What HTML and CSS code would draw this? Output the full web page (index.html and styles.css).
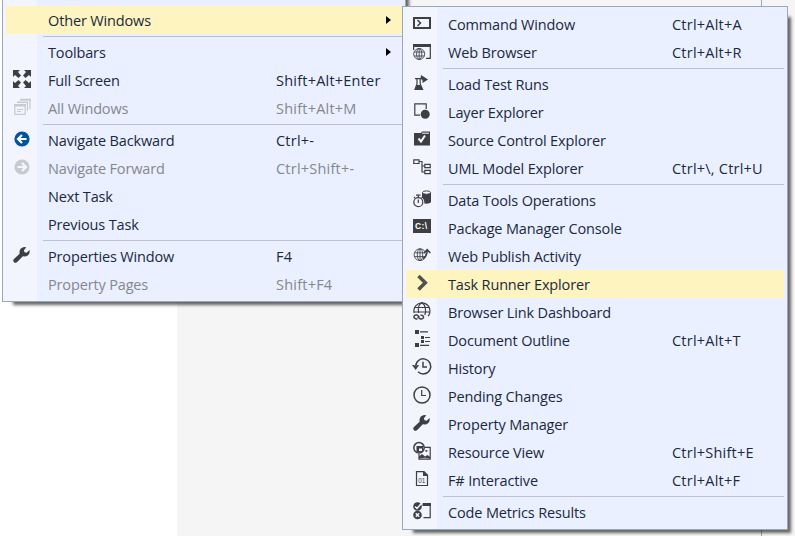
FILE: index.html
```html
<!DOCTYPE html>
<html lang="en">
<head>
<meta charset="utf-8">
<title>View menu</title>
<link rel="stylesheet" href="styles.css">
</head>
<body>
<div class="workspace"></div>
<div class="edge"></div>

<svg class="defs" aria-hidden="true">
  <symbol id="wrench" viewBox="0 0 18 18"><path d="M1 16.200C-.3 15 .2 13.600 1.200 12.800L6.600 7.800C6 4.500 7.600 1.500 11 1L13.300 1.200L10.900 4.200L11.500 6.200L13.600 6.800L16.600 4C17.200 7.500 15 10.300 12 10.500L9.800 10.300L4.500 15.800C3.300 17 1.800 17 1 16.200Z"/></symbol>
</svg>

<nav class="menu menu-main">
  <div class="item active"><i></i><span>Other Windows</span><b class="arrow"></b></div>
  <hr>
  <div class="item"><i></i><span>Toolbars</span><b class="arrow"></b></div>
  <div class="item"><i><svg viewBox="0 0 18 18"><path d="M0 0H7L5 2L8 5.500L5.500 8L2 5L0 7ZM18 0V7L16 5L12.500 8L10 5.500L13 2L11 0ZM0 18V11L2 13L5.500 10L8 12.500L5 16L7 18ZM18 18H11L13 16L10 12.500L12.500 10L16 13L18 11Z"/></svg></i><span>Full Screen</span><kbd>Shift+Alt+Enter</kbd></div>
  <div class="item disabled"><i><svg viewBox="0 0 18 18"><path class="ln thin" d="M1.800 7H12.200V16.300H1.800ZM4 4.500H14.500V13M7 1.700H17V11"/><path d="M1 6H13V8.500H1ZM4 3.500H15V5H4ZM7 .8H18V2.500H7ZM4 11H10V12H4ZM4 13H8V14H4Z"/></svg></i><span>All Windows</span><kbd>Shift+Alt+M</kbd></div>
  <hr>
  <div class="item"><i><svg viewBox="0 0 18 18"><circle cx="9" cy="9" r="7.600" fill="#00539c"/><path d="M13.500 9H5.500M9 5L5 9L9 13" fill="none" stroke="#fff" stroke-width="2.200"/></svg></i><span>Navigate Backward</span><kbd>Ctrl+-</kbd></div>
  <div class="item disabled"><i><svg viewBox="0 0 18 18"><circle cx="9" cy="9" r="7.500"/><path d="M4.500 9H12.500M9 5L13 9L9 13" fill="none" stroke="#f5f7ff" stroke-width="2.200"/></svg></i><span>Navigate Forward</span><kbd>Ctrl+Shift+-</kbd></div>
  <div class="item"><i></i><span>Next Task</span></div>
  <div class="item"><i></i><span>Previous Task</span></div>
  <hr>
  <div class="item"><i><svg><use href="#wrench"/></svg></i><span>Properties Window</span><kbd>F4</kbd></div>
  <div class="item disabled"><i></i><span>Property Pages</span><kbd>Shift+F4</kbd></div>
</nav>

<nav class="menu menu-sub">
  <div class="item"><i><svg viewBox="0 0 18 18"><path d="M0 3H18V15H0ZM2 5V13H16V5Z" fill-rule="evenodd"/><path class="ln" d="M4.500 6L7.500 9L4.500 12"/></svg></i><span>Command Window</span><kbd>Ctrl+Alt+A</kbd></div>
  <div class="item"><i><svg viewBox="0 0 18 18"><path d="M0 2H18V5H0Z"/><path class="ln thin" d="M.6 4V8M17.300 4V16.300H13"/><g class="ln fine"><circle cx="6.200" cy="12" r="5.500"/><ellipse cx="6.200" cy="12" rx="2.600" ry="5.500"/><path d="M6.200 6.500V17.500M1 10H11.400M1 14H11.400"/></g></svg></i><span>Web Browser</span><kbd>Ctrl+Alt+R</kbd></div>
  <hr>
  <div class="item"><i><svg viewBox="0 0 18 18"><path class="ln thin" d="M2 4.600H9M4 5V10L2 15.400H9.500L7.200 10V5"/><path d="M4 11H7.500L10 16H1.500ZM8 1L15 5.500L9.500 9V6L7.500 4.500Z"/></svg></i><span>Load Test Runs</span></div>
  <div class="item"><i><svg viewBox="0 0 18 18"><path class="ln thin" d="M7 13.200H1.800V1.800H13.200V7"/><circle cx="12.200" cy="12.200" r="4.500"/></svg></i><span>Layer Explorer</span></div>
  <div class="item"><i><svg viewBox="0 0 18 18"><path d="M1 3H8L9 1.500H17V15.500H1Z"/><path d="M9 3.200H16" stroke="#f5f7ff" stroke-width="1"/><path d="M5.500 8.500L8 11.500L12 5.500" fill="none" stroke="#f5f7ff" stroke-width="2"/></svg></i><span>Source Control Explorer</span></div>
  <div class="item"><i><svg viewBox="0 0 18 18"><path class="ln thin" d="M.8 1.800H6V5.500H.8ZM11.800 6.300H17.200V9.700H11.800ZM11.800 12.300H17.200V15.700H11.800ZM6 3.500H9V14H11.500M9 8H11.500"/></svg></i><span>UML Model Explorer</span><kbd>Ctrl+\, Ctrl+U</kbd></div>
  <hr>
  <div class="item"><i><svg viewBox="0 0 18 18"><path d="M9 2.800V12C10 14.300 17 14.300 18 12V2.800Z"/><ellipse cx="13.500" cy="2.600" rx="4" ry="1.700" fill="#f5f7ff" stroke="#3f3f43"/><circle cx="5.300" cy="12.200" r="6" fill="#f5f7ff"/><g class="ln thin"><circle cx="5.300" cy="12.200" r="4.500"/><path d="M3 5.200H7.500M5.300 5.200V8M5.300 9.500V13M1 7L2 8M9.600 7L8.600 8"/></g></svg></i><span>Data Tools Operations</span></div>
  <div class="item"><i><svg viewBox="0 0 18 18"><path d="M0 1H18V15H0Z"/><text x="2" y="11.200" class="cmd">C:\</text></svg></i><span>Package Manager Console</span></div>
  <div class="item"><i><svg viewBox="0 0 18 18"><g class="ln fine"><circle cx="7" cy="8.700" r="5.900"/><ellipse cx="7" cy="8.700" rx="2.700" ry="5.900"/><path d="M7 3V14.400M1.600 6.800H12M1.600 10.600H12.400"/></g><path d="M10.500 5H12.500V8.500L14 8V5Z" fill="#f5f7ff"/><path class="ln" d="M10 12.500C12.800 11.300 14.200 9 14.200 4M11 7L14.200 3.700L17.300 7"/></svg></i><span>Web Publish Activity</span></div>
  <div class="item active"><i><svg viewBox="0 0 18 18"><path d="M5.500 2L12.300 8.800L5.500 15.600" fill="none" stroke="#505050" stroke-width="3.500"/></svg></i><span>Task Runner Explorer</span></div>
  <div class="item"><i><svg viewBox="0 0 18 18"><g class="ln thin"><path d="M1.200 11A8 8 0 1 1 15 14.200"/><path d="M5.700 11C4.300 5 6.500 2 9 .8C12.500 3 13.500 9 11.800 13M1.500 5.500H16.500M1.200 10H17"/></g><path d="M4.500 17H3.500C-.5 16.500 .5 12.500 4 13L6.500 15M4.500 15L7.500 17C11.500 17.500 11.500 12.500 7.500 13.200" class="ln"/></svg></i><span>Browser Link Dashboard</span></div>
  <div class="item"><i><svg viewBox="0 0 18 18"><path d="M2 0H6V4H2ZM2 13H6V17H2ZM8 6H11V9H8ZM8 10H11V13H8ZM7 1.300H15V2.500H7ZM12 6.900H17V8H12ZM12 10.900H17V12H12ZM7 14.700H16V16H7Z"/></svg></i><span>Document Outline</span><kbd>Ctrl+Alt+T</kbd></div>
  <div class="item"><i><svg viewBox="0 0 18 18"><path class="ln" d="M2.700 8.500A7.500 7.500 0 1 1 5 13.800M10 3.800V9H14"/><path d="M-1 7H1L2.700 8.500L4.500 7H6L2.700 12Z"/></svg></i><span>History</span></div>
  <div class="item"><i><svg viewBox="0 0 18 18"><circle class="ln" cx="9" cy="9" r="8"/><path class="ln thin" d="M8.700 4V9.500H13"/></svg></i><span>Pending Changes</span></div>
  <div class="item"><i><svg><use href="#wrench"/></svg></i><span>Property Manager</span></div>
  <div class="item"><i><svg viewBox="0 0 18 18"><circle class="ln" cx="6" cy="5.800" r="5.200"/><path d="M3.500 4H10V10H3.500Z"/><path d="M6 6.500H9V9H6Z" fill="#f5f7ff"/><path class="ln thin" d="M11.500 5.400H17.200V17.200H6V12"/><path d="M6 14.500L9 12L12 14.500L14.500 13L17 15V16.500L12 15.800L6 16.500ZM12.500 8H14.300V9.800H12.500Z"/></svg></i><span>Resource View</span><kbd>Ctrl+Shift+E</kbd></div>
  <div class="item"><i><svg viewBox="0 0 18 18"><path class="ln thin" d="M3.500 1.700H11L14.500 5V15.500H3.500Z"/><path d="M10 1L15 6H10Z"/><text x="5.200" y="13.200" class="bits">01</text></svg></i><span>F# Interactive</span><kbd>Ctrl+Alt+F</kbd></div>
  <hr>
  <div class="item"><i><svg viewBox="0 0 18 18"><path d="M9.500 1H18V4H9.500Z"/><path class="ln thin" d="M17.200 3V15.700H10.500"/><circle cx="4.500" cy="4.500" r="4.300"/><circle cx="4.500" cy="13" r="4.300"/><path d="M2 4.500L4 6.500L9 .8M2.800 11.300L6.200 14.700M6.200 11.300L2.800 14.700" fill="none" stroke="#f5f7ff" stroke-width="1.500"/></svg></i><span>Code Metrics Results</span></div>
</nav>
</body>
</html>
```

FILE: styles.css
```css
body {
  margin: 0;
  width: 795px;
  height: 536px;
  overflow: hidden;
  position: relative;
  background: #fff;
  font: 14.5px/30px "Open Sans", "Noto Sans", sans-serif;
  letter-spacing: -0.15px;
  color: #1b293e;
}
.defs { position: absolute; width: 0; height: 0; }
.workspace { margin-left: 177px; height: 536px; background: #f5f5f5; }
.edge { position: absolute; left: 761px; top: 0; width: 1px; height: 536px; background: #9ba7b7; }

/* Floating menus */
.menu {
  position: absolute;
  box-sizing: border-box;
  padding: 3px;
  border: 1px solid #9ba7b7;
  background: linear-gradient(90deg, #f2f4fe 34px, #eaf0ff 34px);
  box-shadow: 7px 7px 3px -4px rgba(0, 0, 0, .6);
}
.menu-main { left: 2px; top: -22px; width: 404px; height: 324px; padding-top: 27px; }
.menu-sub { left: 402px; top: 6px; width: 386px; height: 524px; }
.item { display: flex; height: 28px; white-space: pre; }
.item.active { background: #fdf4bf; }
.item i { flex: 0 0 42px; }
.item span { flex: 0 0 224px; }
.menu-main .item span { flex-basis: 228px; }
kbd { font: inherit; letter-spacing: 0.22px; }
.arrow {
  margin: 10px 0 0 110px;
  width: 0;
  height: 0;
  border: 4.5px solid transparent;
  border-left: 5px solid #000;
  border-right: 0;
}
hr { margin: 2px 0 1px 37px; height: 1px; border: 0; background: #bbc0cc; }
.disabled { color: #85878d; }

/* Icons */
.item svg { display: block; width: 18px; height: 18px; margin: 4px 0 0 7px; fill: #3f3f43; overflow: visible; }
.ln { fill: none; stroke: #3f3f43; stroke-width: 1.5; }
.thin { stroke-width: 1.2; }
.fine { stroke-width: 0.85; }
.disabled svg { fill: #c8cad1; }
.disabled .ln { stroke: #c8cad1; }
.item .cmd { font: bold 8.500px "Liberation Sans", sans-serif; fill: #fff; letter-spacing: .4px; }
.item .bits { font: 6.5px "Liberation Sans", sans-serif; letter-spacing: 0; }
```
